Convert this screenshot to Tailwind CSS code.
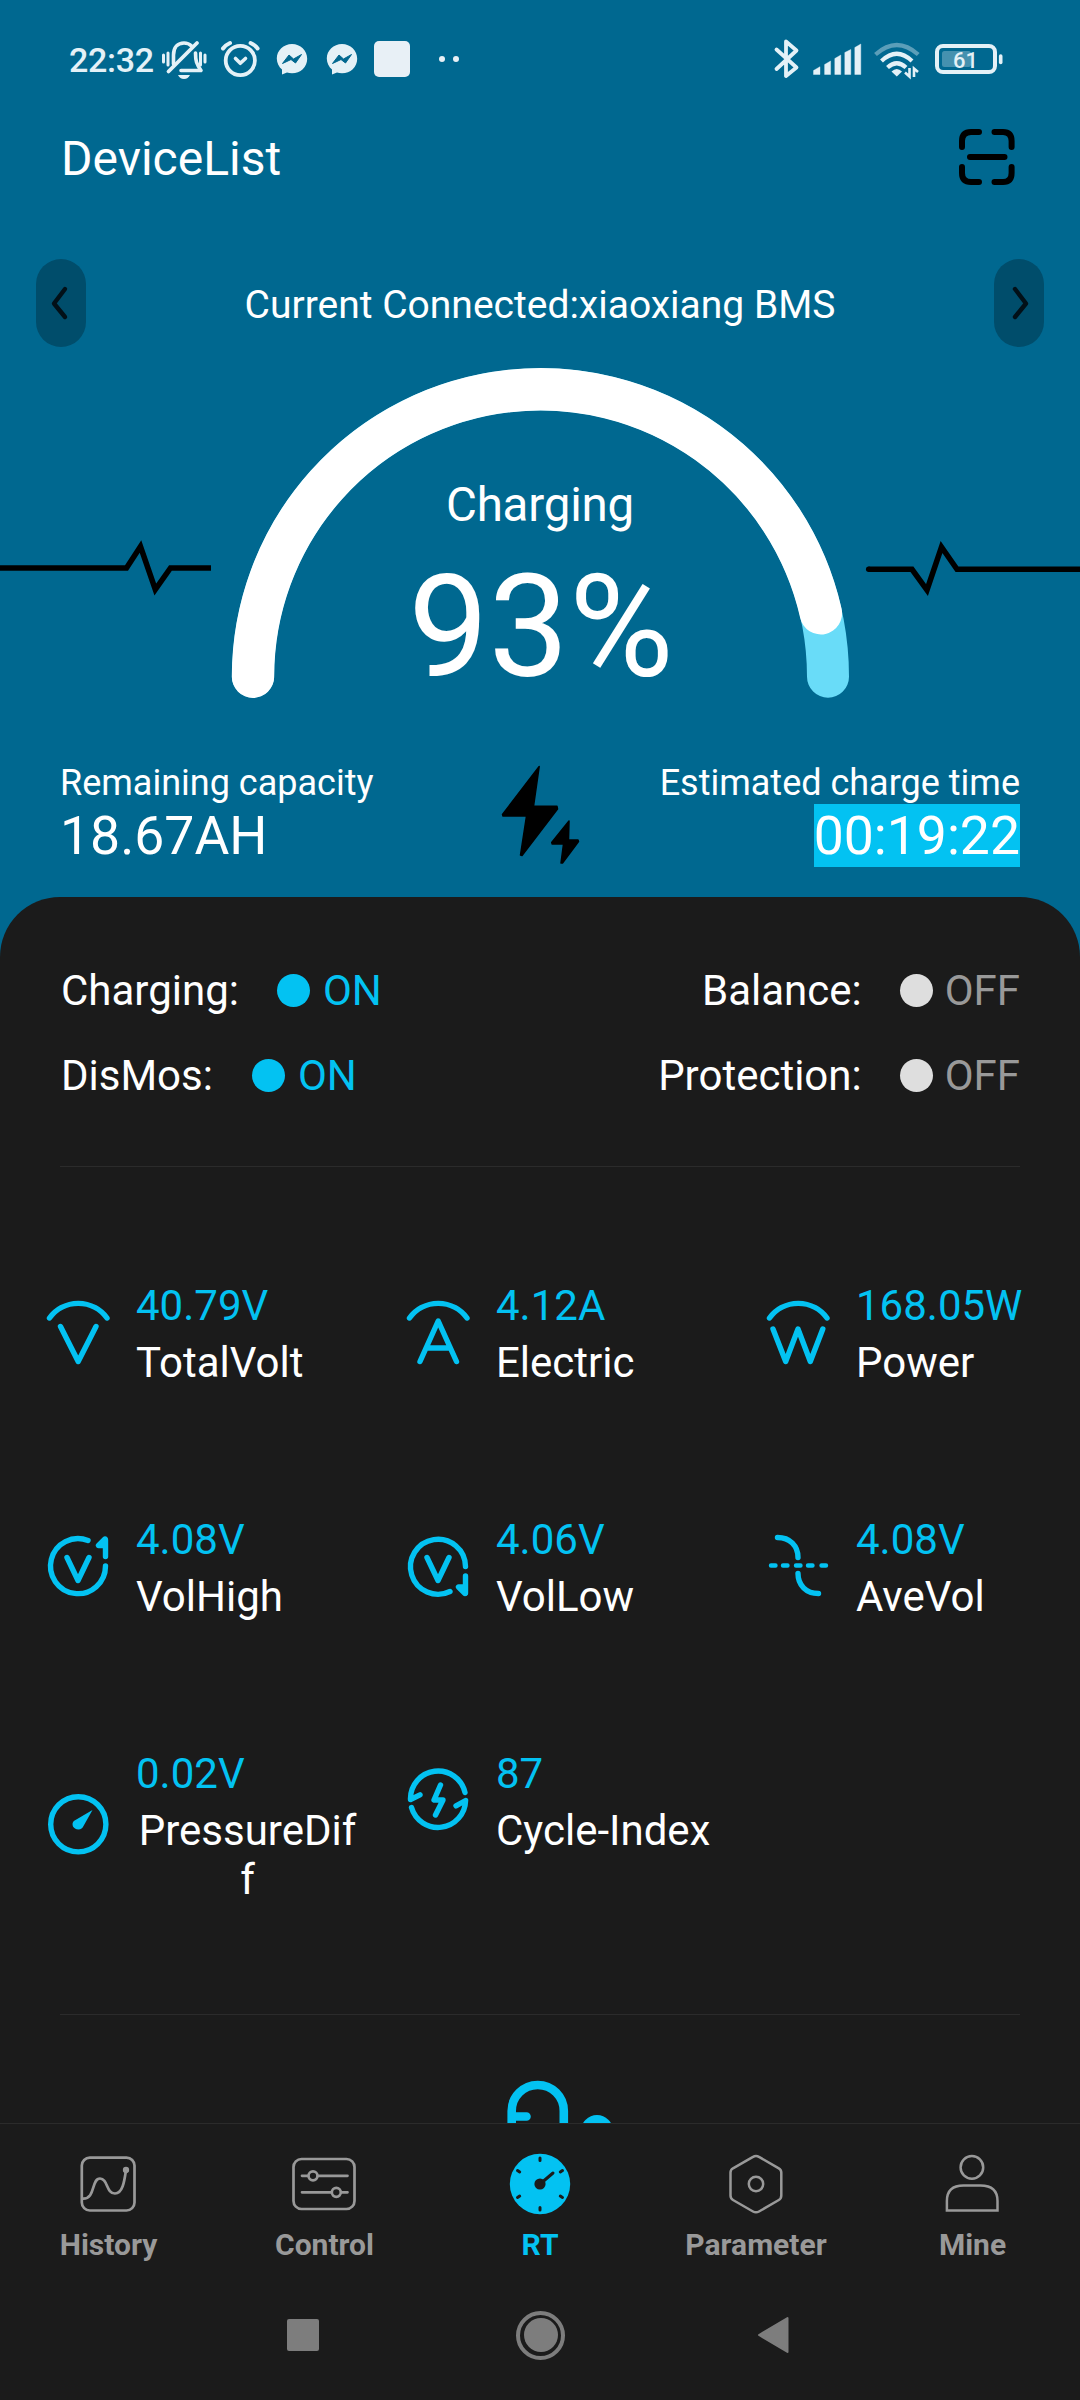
<!DOCTYPE html>
<html lang="en">
<head>
<meta charset="utf-8">
<title>Battery monitor</title>
<script src="https://cdn.jsdelivr.net/npm/@tailwindcss/browser@4"></script>
</head>
<body class="bg-[#006890]">
<div class="w-[1080px] h-[2400px] overflow-hidden flex flex-col bg-[#006890] font-[Roboto,sans-serif] text-white">

  <!-- Status bar -->
  <div class="h-[120px] shrink-0 flex items-center pl-[69px] pr-[76px] text-[#e4f1f7]">
    <span class="text-[34px] leading-none font-medium tracking-[-0.3px] w-[89px]">22:32</span>
    <svg class="w-[48px] h-[44px] shrink-0 ml-[2px]" viewBox="160 38 48 44" fill="none" stroke="#e4f1f7" stroke-linecap="round">
      <path d="M163.500 55V62M168 53V65M200.500 53V65M205 55V62" stroke-width="3"/>
      <path d="M173.500 64V55C173.500 47 178 43 184 43C187 43 189.500 44 191.500 46M195.500 53C195.500 61 196.500 64 201 70.500H181" stroke-width="3.600" stroke-linejoin="round"/>
      <path d="M168.500 71.500L197 43" stroke-width="3.800"/>
      <path d="M178 75H190C188.500 77.800 187 79 184 79S179.500 77.800 178 75Z" fill="#e4f1f7" stroke="none"/>
    </svg>
    <svg class="w-[44px] h-[44px] shrink-0 ml-[10px]" viewBox="218 38 44 44" fill="none" stroke="#e4f1f7" stroke-linecap="round">
      <circle cx="240.300" cy="60.500" r="14.600" stroke-width="3.800"/>
      <path d="M223 48.500Q225.500 45 230 43M257.600 48.500Q255 45 250.600 43" stroke-width="4"/>
      <path d="M235.500 58.500L240.300 63.300L245.500 58.500" stroke-width="3.600" stroke-linejoin="round"/>
    </svg>
    <svg class="w-[32px] h-[34px] shrink-0 ml-[14px]" viewBox="0 0 32 34">
      <path d="M16 1C7.500 1 .8 7.500 .8 15.500C.8 20 3 24 6 26.600V31.500L11 29.500C12.500 30 14.200 30.300 16 30.300C24.500 30.300 31.200 24 31.200 15.700C31.200 7.500 24.500 1 16 1Z" fill="#e4f1f7"/>
      <path d="M6.500 20.500L13 12L17.500 16L25.500 11.500L19.500 20L15 16.500Z" fill="#006890" stroke="#006890" stroke-linejoin="round"/>
    </svg>
    <svg class="w-[32px] h-[34px] shrink-0 ml-[18px]" viewBox="0 0 32 34">
      <path d="M16 1C7.500 1 .8 7.500 .8 15.500C.8 20 3 24 6 26.600V31.500L11 29.500C12.500 30 14.200 30.300 16 30.300C24.500 30.300 31.200 24 31.200 15.700C31.200 7.500 24.500 1 16 1Z" fill="#e4f1f7"/>
      <path d="M6.500 20.500L13 12L17.500 16L25.500 11.500L19.500 20L15 16.500Z" fill="#006890" stroke="#006890" stroke-linejoin="round"/>
    </svg>
    <div class="w-9 h-9 shrink-0 rounded-[5px] bg-[#e8f0f6] ml-[16px] -mt-[2px]"></div>
    <div class="w-[6px] h-[6px] shrink-0 rounded-full bg-[#e8f0f6] ml-[29px] -mt-[2px]"></div>
    <div class="w-[6px] h-[6px] shrink-0 rounded-full bg-[#e8f0f6] ml-[8px] -mt-[2px]"></div>

    <svg class="w-[232px] h-[44px] shrink-0 ml-auto" viewBox="772 38 232 44" fill="none">
      <path d="M776.500 49.500L796.500 67.500L786 76V41.500L796.500 50.500L776.500 69" stroke="#e4f1f7" stroke-width="3.800" stroke-linecap="round" stroke-linejoin="round"/>
      <g fill="#e4f1f7">
        <path d="M813.500 74.500V70.500L820 66.700V74.500ZM824.600 74.500V64.500L830.600 61V74.500ZM834.800 74.500V58.500L840.800 55V74.500ZM844.800 74.500V52.500L850.800 49.500V74.500ZM854.800 74.500V47.500L860.800 44V74.500Z" stroke="#e4f1f7" stroke-width=".4" stroke-linejoin="round"/>
        <path d="M896.800 76.500L891.500 71.500Q896.800 66.500 902 71.500Z"/>
      </g>
      <g stroke="#e4f1f7" stroke-width="4.200">
        <path d="M875.500 54.500Q896.800 35.500 918.200 54.500" opacity=".4"/>
        <path d="M881.500 61Q896.800 46.500 912 61"/>
        <path d="M887.500 67.500Q896.800 59 906 67.500"/>
      </g>
      <path d="M905 72.500L909.500 76.500V68M918 72L914 68.500V77" stroke="#e4f1f7" stroke-width="2.600"/>
      <rect x="942" y="51" width="29" height="16" rx="2.500" fill="#e4f1f7" opacity=".3"/>
      <rect x="937" y="46" width="58" height="26" rx="6" stroke="#e4f1f7" stroke-width="4"/>
      <path d="M1000.700 56V62.500" stroke="#e4f1f7" stroke-width="3.600" stroke-linecap="round"/>
      <text x="965.500" y="67.800" text-anchor="middle" font-family="Roboto" font-weight="500" font-size="22" fill="#e4f1f7">61</text>
    </svg>
  </div>

  <!-- Title -->
  <div class="h-[76px] shrink-0 flex items-center justify-between pl-[61px] pr-[62px]">
    <span class="text-[48px] leading-[56px] pt-[2px]">DeviceList</span>
    <svg class="w-[62px] h-[62px] -mt-[2px]" viewBox="956 126 62 62" fill="none" stroke="#000" stroke-width="6" stroke-linecap="round">
      <path d="M962 147V141Q962 132 971 132H979M994.500 132H1003Q1011.600 132 1011.600 141V147M1011.600 167V173Q1011.600 182 1003 182H994.500M979 182H971Q962 182 962 173V167M970 157H1004.500"/>
    </svg>
  </div>

  <!-- Device switcher -->
  <div class="mt-[63px] h-[88px] shrink-0 flex items-center justify-between px-9">
    <div class="w-[50px] h-[88px] rounded-full bg-[#004d6b] flex items-center justify-center">
      <svg class="w-5 h-9 -ml-[4px]" viewBox="0 0 20 36" fill="none" stroke="#021018" stroke-width="4.400" stroke-linecap="round" stroke-linejoin="round"><path d="M16 4L5 18.500L16 32"/></svg>
    </div>
    <span class="text-[39px] leading-[46px] pt-[3px]">Current Connected:xiaoxiang BMS</span>
    <div class="w-[50px] h-[88px] rounded-full bg-[#004d6b] flex items-center justify-center">
      <svg class="w-5 h-9 ml-[4px]" viewBox="0 0 20 36" fill="none" stroke="#021018" stroke-width="4.400" stroke-linecap="round" stroke-linejoin="round"><path d="M4 4L15 18.500L4 32"/></svg>
    </div>
  </div>

  <!-- Charge gauge -->
  <div class="h-[364px] shrink-0 grid">
    <svg class="col-start-1 row-start-1 w-[1080px] h-[364px]" viewBox="0 347 1080 364" fill="none">
      <path d="M253 676.700A287.500 287.500 0 0 1 828 676.700" stroke="#69dcf8" stroke-width="42" stroke-linecap="round"/>
      <path d="M253 676.700A287.500 287.500 0 0 1 820.880 613.200" stroke="#fff" stroke-width="42.400" stroke-linecap="round"/>
      <path d="M0 568H126.500L140.500 546.500L155.300 589.500L170.500 568H211" stroke="#000" stroke-width="5.500"/>
      <path d="M868.500 569.300H912L927 590L941.500 547L957 569.300H1080" stroke="#000" stroke-width="5.500"/>
      <circle cx="868.700" cy="569.300" r="2.750" fill="#000"/>
    </svg>
    <div class="col-start-1 row-start-1 flex flex-col items-center pt-[130px]">
      <span class="text-[47.5px] leading-[56px] tracking-[-0.2px]">Charging</span>
      <span class="mt-[10px] pl-[2px] text-[143px] leading-[169px]">93%</span>
    </div>
  </div>

  <!-- Capacity and time -->
  <div class="mt-[52px] h-[104px] shrink-0 px-[60px] grid grid-cols-[1fr_auto_1fr]">
    <div class="flex flex-col items-start">
      <span class="text-[36px] leading-[40px]">Remaining capacity</span>
      <span class="mt-px text-[53.5px] leading-[63px]">18.67AH</span>
    </div>
    <svg class="w-[80px] h-[104px]" viewBox="501 763 80 104" fill="#000" stroke="#000" stroke-width="1.500" stroke-linejoin="round">
      <path d="M540.200 766.500L503.500 814.500L504 816H527.500L521.500 855L523 855.500L558.500 809L558 806.300H534.500Z"/>
      <path d="M570 821L552.700 842.500L553.200 844H564.500L562 863L563.500 863L579.500 841.500L579 840H569.500Z"/>
    </svg>
    <div class="flex flex-col items-end">
      <span class="text-[36px] leading-[40px]">Estimated charge time</span>
      <span class="mt-px text-[53.5px] leading-[63px] bg-[#03c2f2]">00:19:22</span>
    </div>
  </div>

  <!-- Details panel -->
  <div class="mt-[30px] h-[1226px] shrink-0 overflow-hidden rounded-t-[60px] bg-[#1b1b1b] pt-[68px] flex flex-col text-[42px] leading-[49px]">
    <div class="pl-[61px] pr-[60px] flex flex-col gap-[35px] shrink-0">
      <div class="h-[50px] flex items-center">
        <span>Charging:</span>
        <div class="w-[33px] h-[33px] rounded-full bg-[#03c2f2] ml-[38px]"></div>
        <span class="ml-[13px] text-[#03c2f2]">ON</span>
        <span class="ml-auto">Balance:</span>
        <div class="w-[33px] h-[33px] rounded-full bg-[#dedede] ml-[38px]"></div>
        <span class="ml-[12px] text-[#999]">OFF</span>
      </div>
      <div class="h-[50px] flex items-center">
        <span>DisMos:</span>
        <div class="w-[33px] h-[33px] rounded-full bg-[#03c2f2] ml-[39px]"></div>
        <span class="ml-[13px] text-[#03c2f2]">ON</span>
        <span class="ml-auto">Protection:</span>
        <div class="w-[33px] h-[33px] rounded-full bg-[#dedede] ml-[38px]"></div>
        <span class="ml-[12px] text-[#999]">OFF</span>
      </div>
    </div>
    <div class="mt-[66px] mx-[60px] h-px shrink-0 bg-[#2b2b2b]"></div>

    <!-- Readings -->
    <div class="mt-[114px] shrink-0 grid grid-cols-3 gap-y-[128px] items-start">
      <div class="flex items-center pl-[42px] gap-[22px]">
        <svg class="w-[72px] h-[72px] shrink-0" viewBox="42 1298 72 72" fill="none" stroke="#03c2f2" stroke-width="5.400" stroke-linecap="round" stroke-linejoin="round"><path d="M49.500 1318A35.500 35.500 0 0 1 107 1318M60.500 1326.500L78.200 1361.500L96 1326.500"/></svg>
        <div class="w-[223px] flex flex-col items-start gap-2"><span class="text-[#03c2f2]">40.79V</span><span>TotalVolt</span></div>
      </div>
      <div class="flex items-center pl-[42px] gap-[22px]">
        <svg class="w-[72px] h-[72px] shrink-0" viewBox="42 1298 72 72" fill="none" stroke="#03c2f2" stroke-width="5.400" stroke-linecap="round" stroke-linejoin="round"><path d="M49.500 1318A35.500 35.500 0 0 1 107 1318M60 1361.500L78.200 1321L96.500 1361.500M67 1348H89.500"/></svg>
        <div class="w-[223px] flex flex-col items-start gap-2"><span class="text-[#03c2f2]">4.12A</span><span>Electric</span></div>
      </div>
      <div class="flex items-center pl-[42px] gap-[22px]">
        <svg class="w-[72px] h-[72px] shrink-0" viewBox="42 1298 72 72" fill="none" stroke="#03c2f2" stroke-width="5.400" stroke-linecap="round" stroke-linejoin="round"><path d="M49.500 1318A35.500 35.500 0 0 1 107 1318M53 1329L65.700 1361.500L78 1329L90.300 1361.500L102.800 1329"/></svg>
        <div class="w-[223px] flex flex-col items-start gap-2"><span class="text-[#03c2f2]">168.05W</span><span>Power</span></div>
      </div>

      <div class="flex items-center pl-[42px] gap-[22px]">
        <svg class="w-[72px] h-[72px] shrink-0" viewBox="42 1532 72 72" fill="none" stroke="#03c2f2" stroke-width="5.400" stroke-linecap="round" stroke-linejoin="round"><path d="M88 1540.500A27.500 27.500 0 1 0 105.500 1566M67 1557.500L78 1580.500L89 1557.500M105.500 1540V1556.500"/><path d="M105 1539L98.500 1545.500H105Z" fill="#03c2f2"/></svg>
        <div class="w-[223px] flex flex-col items-start gap-2"><span class="text-[#03c2f2]">4.08V</span><span>VolHigh</span></div>
      </div>
      <div class="flex items-center pl-[42px] gap-[22px]">
        <svg class="w-[72px] h-[72px] shrink-0" viewBox="42 1532 72 72" fill="none" stroke="#03c2f2" stroke-width="5.400" stroke-linecap="round" stroke-linejoin="round"><path d="M90 1591.500A27.500 27.500 0 1 1 105.500 1566.500M67 1557.500L78 1580.500L89 1557.500M105.500 1576V1593"/><path d="M105 1593.500L98.500 1587H105Z" fill="#03c2f2"/></svg>
        <div class="w-[223px] flex flex-col items-start gap-2"><span class="text-[#03c2f2]">4.06V</span><span>VolLow</span></div>
      </div>
      <div class="flex items-center pl-[42px] gap-[22px]">
        <svg class="w-[72px] h-[72px] shrink-0" viewBox="42 1532 72 72" fill="none" stroke="#03c2f2" stroke-width="5.400" stroke-linecap="round"><path d="M57.500 1537.500C70 1537.500 78 1546 78 1557.500M78 1573.500C78 1585 86 1593.500 98.500 1593.500"/><path d="M51 1565.500H55.500M63 1565.500H67.500M76 1565.500H80.500M88 1565.500H92.500M101.500 1565.500H106" stroke-width="4.400"/></svg>
        <div class="w-[223px] flex flex-col items-start gap-2"><span class="text-[#03c2f2]">4.08V</span><span>AveVol</span></div>
      </div>

      <div class="flex items-center pl-[42px] gap-[22px]">
        <svg class="w-[72px] h-[72px] shrink-0" viewBox="42 1790.500 72 72" fill="none" stroke="#03c2f2" stroke-width="5.400"><circle cx="78.300" cy="1823.800" r="27.600"/><path d="M92.500 1809.500L73.800 1820.500C71 1823.500 73 1829 78.500 1829C81 1829 82.500 1827.500 83.500 1825.500Z" fill="#03c2f2" stroke="none"/></svg>
        <div class="w-[223px] flex flex-col items-start gap-2"><span class="text-[#03c2f2]">0.02V</span><span class="break-all text-center">PressureDiff</span></div>
      </div>
      <div class="flex items-center pl-[42px] gap-[22px]">
        <svg class="w-[72px] h-[72px] shrink-0" viewBox="42 1766 72 72" fill="none" stroke="#03c2f2" stroke-width="5.400" stroke-linecap="round" stroke-linejoin="round"><path d="M105 1792.500A27.600 27.600 0 0 0 50.500 1799.500L60 1794.800M51.500 1807.500A27.600 27.600 0 0 0 105.600 1800.500L96 1805.800M80.500 1785L74 1800H83L75.500 1815"/></svg>
        <div class="w-[223px] flex flex-col items-start gap-2"><span class="text-[#03c2f2]">87</span><span>Cycle-Index</span></div>
      </div>
    </div>

    <div class="mt-[110px] mx-[60px] h-px shrink-0 bg-[#2b2b2b]"></div>
    <svg class="mt-[63px] ml-[500px] w-[120px] h-[80px] shrink-0" viewBox="500 2078 120 80" fill="none">
      <path d="M511.700 2158V2111A26 26 0 0 1 563.800 2111V2158M513 2116.500H526.500" stroke="#03c2f2" stroke-width="8.600" stroke-linecap="round"/>
      <circle cx="597" cy="2131" r="16" fill="#03c2f2"/>
    </svg>
  </div>

  <!-- Tab bar -->
  <div class="h-[147px] shrink-0 border-t border-[#2b2b2b] bg-[#1b1b1b] grid grid-cols-5 pt-[28px] text-[30px] leading-[36px] font-bold text-[#999]">
    <div class="flex flex-col items-center gap-[11px]">
      <svg class="w-16 h-16" viewBox="76 2152 64 64" fill="none" stroke="#999" stroke-width="2.700" stroke-linecap="round"><rect x="81.800" y="2157.600" width="52.700" height="52.900" rx="8"/><path d="M82.500 2198.500C96 2199.500 91 2178.500 100 2178.500C108 2178.500 106 2193.500 115 2193.500C123 2193.500 124.500 2180 126 2170"/><circle cx="126" cy="2170" r="1.800" fill="#999"/></svg>
      <span class="pl-px">History</span>
    </div>
    <div class="flex flex-col items-center gap-[11px]">
      <svg class="w-[66px] h-16" viewBox="291 2152 66 64" fill="none" stroke="#999" stroke-width="2.700" stroke-linecap="round"><rect x="293.500" y="2159" width="61" height="50" rx="8"/><path d="M302 2175.800H308M318 2175.800H347.500M302 2192.300H331M341.500 2192.300H347.500"/><circle cx="313" cy="2175.800" r="4.500"/><circle cx="336.300" cy="2192.300" r="4.500"/></svg>
      <span class="pl-px">Control</span>
    </div>
    <div class="flex flex-col items-center gap-[11px] text-[#03c2f2]">
      <svg class="w-16 h-16" viewBox="508 2152 64 64" fill="none" stroke="#1b1b1b" stroke-width="3" stroke-linecap="round"><circle cx="540" cy="2184" r="30.200" fill="#03c2f2" stroke="none"/><circle cx="540" cy="2184" r="5.600" fill="#1b1b1b" stroke="none"/><path d="M543 2181.500L553 2173M540 2158V2160.500M540 2207.500V2210M517.500 2170.500L519.700 2172M560.300 2172L562.500 2170.500M517.500 2197.500L519.700 2196M560.300 2196L562.500 2197.500"/></svg>
      <span>RT</span>
    </div>
    <div class="flex flex-col items-center gap-[11px]">
      <svg class="w-16 h-16" viewBox="724 2152 64 64" fill="none" stroke="#999" stroke-width="2.500" stroke-linejoin="round"><path d="M753 2156.900Q756 2155 759 2156.900L778.800 2168.300Q781.300 2169.800 781.300 2172.500V2195.500Q781.300 2198.500 778.800 2200L759 2211.500Q756 2213.200 753 2211.500L733 2200Q730.500 2198.500 730.500 2195.500V2172.500Q730.500 2169.800 733 2168.300Z"/><circle cx="756" cy="2184" r="7.200"/></svg>
      <span>Parameter</span>
    </div>
    <div class="flex flex-col items-center gap-[11px]">
      <svg class="w-16 h-16" viewBox="940 2152 64 64" fill="none" stroke="#999" stroke-width="2.500"><circle cx="971.900" cy="2167.400" r="11.300"/><path d="M946.900 2210.500V2201Q946.900 2185.500 963.500 2185.500H980.500Q997.500 2185.500 997.500 2201V2210.500Z"/></svg>
      <span class="pl-px">Mine</span>
    </div>
  </div>

  <!-- System navigation -->
  <div class="h-[130px] shrink-0 bg-[#1b1b1b] flex items-center pl-[287px]">
    <div class="w-8 h-8 rounded-[2px] bg-[#7d7d7d]"></div>
    <div class="ml-[197px] w-[49px] h-[49px] rounded-full border-4 border-[#7d7d7d] flex items-center justify-center"><div class="w-[34px] h-[34px] rounded-full bg-[#7d7d7d] shrink-0"></div></div>
    <svg class="ml-[192px] w-8 h-[38px]" viewBox="0 0 32 38"><path d="M2 19L30.500 2V36Z" fill="#7d7d7d" stroke="#7d7d7d" stroke-width="2" stroke-linejoin="round"/></svg>
  </div>
</div>
</body>
</html>
